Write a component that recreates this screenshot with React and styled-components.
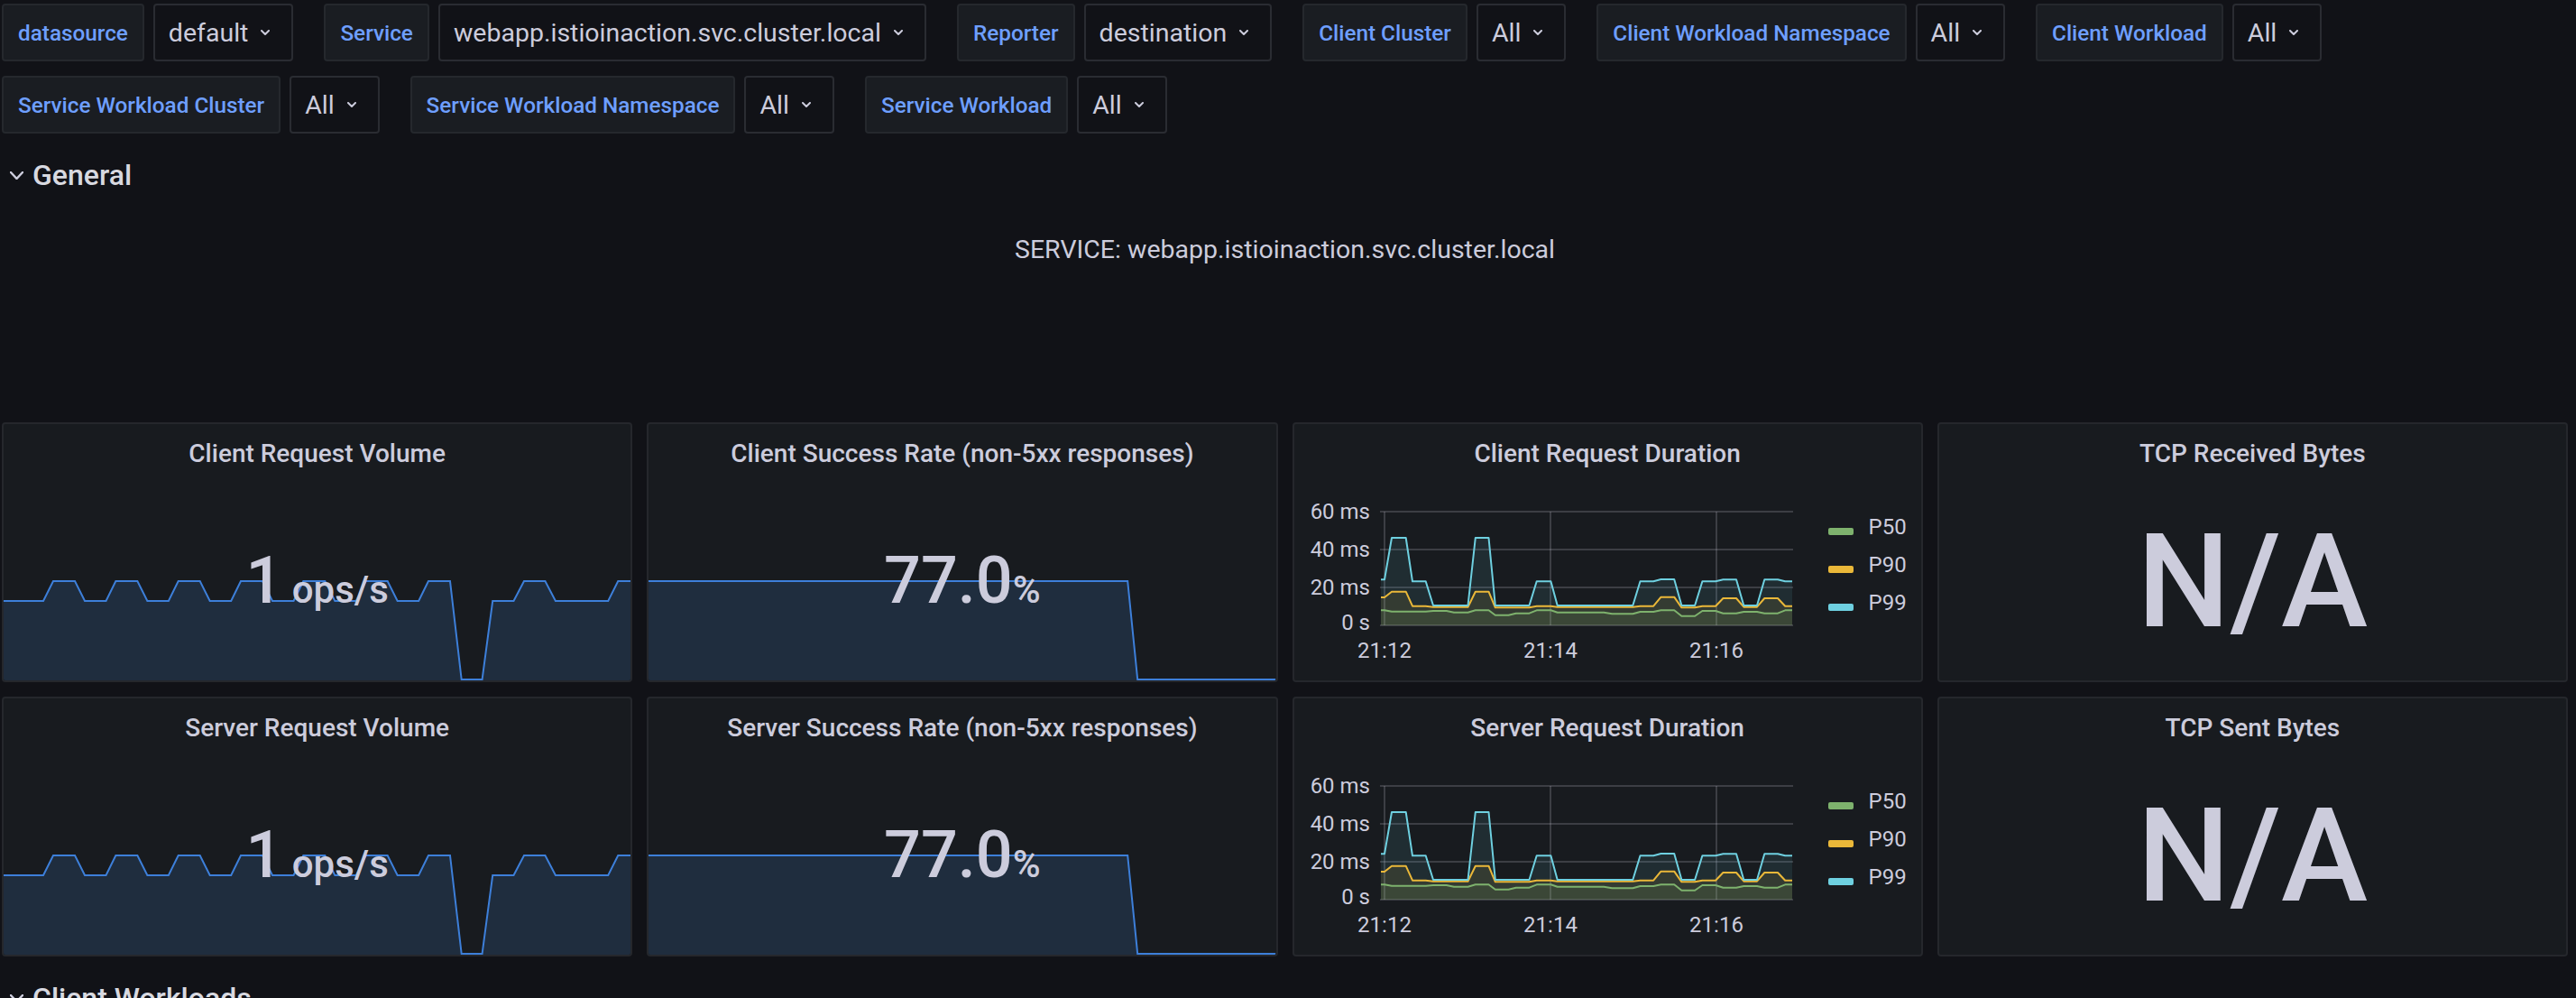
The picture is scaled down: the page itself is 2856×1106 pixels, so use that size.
import React from 'react';
import styled, { createGlobalStyle } from 'styled-components';

const GlobalStyle = createGlobalStyle`
  html, body { margin: 0; padding: 0; background: #111217; }
  body {
    font-family: Roboto, "Liberation Sans", Arial, sans-serif;
    color: #ccccdc;
    overflow: hidden;
  }
`;

const Page = styled.div`
  width: 2856px;
  height: 1106px;
  box-sizing: border-box;
  padding: 4px 9px 0 2px;
  overflow: hidden;
  display: flex;
  flex-direction: column;
  gap: 16px;
`;

const VarBar = styled.div`
  display: flex;
  flex-wrap: wrap;
  column-gap: 34px;
  row-gap: 16px;
`;

const VarGroup = styled.div`
  display: flex;
  gap: 10px;
`;

const VarLabel = styled.div`
  height: 64px;
  box-sizing: border-box;
  display: flex;
  align-items: center;
  padding: 0 16px;
  background: #1a1d22;
  border: 2px solid #25282d;
  border-radius: 4px;
  color: #6e9fff;
  font-size: 24.3px;
  font-weight: 500;
  white-space: nowrap;
`;

const VarSelect = styled.div`
  height: 64px;
  box-sizing: border-box;
  display: flex;
  align-items: center;
  gap: 14px;
  padding: 0 24px 0 15px;
  background: #111217;
  border: 2px solid #2a2c32;
  border-radius: 4px;
  color: #ccccdc;
  font-size: 28.5px;
  white-space: nowrap;
`;

const Grid = styled.div`
  display: grid;
  grid-template-columns: repeat(4, minmax(0, 1fr));
  grid-template-rows: 60px 212px 288px 288px 60px;
  gap: 16px;
`;

const RowHeader = styled.div`
  grid-column: 1 / -1;
  display: flex;
  align-items: center;
  gap: 10px;
  padding-left: 9px;
  font-size: 32px;
  font-weight: 500;
  color: #d8d9e0;
`;

const TextPanel = styled.div`
  grid-column: 1 / -1;
  padding: 16px;
  text-align: center;
  font-size: 28.5px;
  line-height: 42px;
  color: #ccccdc;
`;

const Panel = styled.div`
  background: #181b1f;
  border: 2px solid #25272c;
  border-radius: 4px;
  display: flex;
  flex-direction: column;
  overflow: hidden;
  min-width: 0;
`;

const PanelHeader = styled.div`
  height: 64px;
  flex-shrink: 0;
  display: flex;
  align-items: center;
  justify-content: center;
  font-size: 28px;
  font-weight: 500;
  color: #ccccdc;
  white-space: nowrap;
`;

const StatBody = styled.div`
  flex: 1;
  min-height: 0;
  display: grid;
  grid-template: 1fr / 1fr;
`;

const Spark = styled.svg`
  grid-area: 1 / 1;
  align-self: end;
  width: 100%;
  height: 112px;
  display: block;
`;

const StatValue = styled.div`
  grid-area: 1 / 1;
  align-self: center;
  justify-self: center;
  position: relative;
  font-size: ${p => p.$size}px;
  font-weight: 500;
  line-height: 1;
  color: #ccccdc;
  white-space: pre;
`;

const Unit = styled.span`
  font-size: 42px;
`;

const GraphBody = styled.div`
  flex: 1;
  min-height: 0;
  display: flex;
  align-items: flex-start;
`;

const ChartSvg = styled.svg`
  flex-shrink: 0;
  width: 560px;
  height: 205px;
  margin-left: 2px;
  display: block;
  font-family: Roboto, "Liberation Sans", Arial, sans-serif;
`;

const Legend = styled.div`
  display: flex;
  flex-direction: column;
  padding-top: 29px;
  margin-left: 30px;
`;

const LegendItem = styled.div`
  height: 42px;
  display: flex;
  align-items: center;
  gap: 17px;
  font-size: 24px;
  color: #ccccdc;
`;

const Swatch = styled.span`
  width: 28px;
  height: 8px;
  border-radius: 2px;
  margin-top: 10px;
  background: ${p => p.$color};
`;

const Chevron = ({ w = 10, h = 6, sw = 2 }) => (
  <svg width={w} height={h} viewBox={`0 0 ${w} ${h}`} style={{ flexShrink: 0 }}>
    <polyline
      points={`1,1 ${w / 2},${h - 1} ${w - 1},1`}
      fill="none"
      stroke="#ccccdc"
      strokeWidth={sw}
      strokeLinecap="round"
      strokeLinejoin="round"
    />
  </svg>
);

/* ---------- sparkline data ---------- */
const volumePts = (() => {
  const p = [[0, 24], [44, 24]];
  for (let i = 0; i < 7; i++) {
    const s = 55 + i * 69.3;
    p.push([s, 2], [s + 24, 2]);
    if (i < 6) p.push([s + 35, 24], [s + 58.5, 24]);
  }
  p.push([507.5, 111], [530.4, 111], [542, 24], [565.3, 24], [576.8, 2], [600.2, 2], [611.7, 24], [670, 24], [681, 2], [695, 2]);
  return p;
})();
const successPts = [[0, 2], [531, 2], [542, 111], [695, 111]];

const toLine = pts => pts.map((p, i) => `${i ? 'L' : 'M'}${p[0]},${p[1]}`).join(' ');
const toArea = (pts, base) => `${toLine(pts)} L${pts[pts.length - 1][0]},${base} L${pts[0][0]},${base} Z`;

const Sparkline = ({ pts }) => (
  <Spark viewBox="0 0 695 112" preserveAspectRatio="none">
    <path d={toArea(pts, 112)} fill="#1f2d3e" />
    <path d={toLine(pts)} fill="none" stroke="#3d7fd9" strokeWidth="2" vectorEffect="non-scaling-stroke" />
  </Spark>
);

/* ---------- duration chart data ---------- */
const P99 = [[94,108.3],[98,108.3],[106,62],[121.7,62],[129,110.3],[143.7,110.3],[152,137],[190.5,137],[198.8,62],[213.5,62],[220.8,137],[258.5,137],[266.7,110.3],[282.4,110.3],[289.7,137],[373.3,137],[381.5,110.3],[396.2,110.3],[404.5,108],[419.2,108],[427.4,137],[442.1,137],[450.4,110.3],[465.1,110.3],[473.4,108.3],[488,108.3],[496.3,137],[511,137],[519.3,108.3],[534,108.3],[542.2,110.3],[550,110.3]];
const P90 = [[94,128],[98,128],[106,121.7],[121.7,121.7],[129,137.7],[143.7,137.7],[152,138.7],[190.5,138.7],[198.8,121.7],[213.5,121.7],[220.8,139.3],[258.5,139.3],[266.7,137.7],[282.4,137.7],[289.7,138.7],[373.3,138.7],[381.5,137.7],[396.2,137.7],[404.5,127.7],[419.2,127.7],[427.4,139.3],[442.1,139.3],[450.4,137.7],[465.1,137.7],[473.4,129],[488,129],[496.3,138.7],[511,138.7],[519.3,129],[534,129],[542.2,137.7],[550,137.7]];
const P50 = [[94,142.3],[98,142.3],[106,143.7],[143.7,143.7],[152,143],[166.7,143],[175,144.7],[190.5,144.7],[198.8,142.3],[213.5,142.3],[220.8,147.7],[235.5,147.7],[243.8,145.7],[258.5,145.7],[266.7,142.3],[282.4,142.3],[289.7,144.7],[341.1,144.7],[350.3,146.3],[373.3,146.3],[381.5,144],[396.2,144],[404.5,142.3],[419.2,142.3],[427.4,148.7],[442.1,148.7],[450.4,143],[465.1,143],[473.4,145.7],[488,145.7],[496.3,144],[511,144],[519.3,145.7],[534,145.7],[542.2,142.3],[550,142.3]];

const SERIES = [
  { name: 'P50', color: '#7eb26d', pts: P50 },
  { name: 'P90', color: '#eab839', pts: P90 },
  { name: 'P99', color: '#6ed0e0', pts: P99 },
];

const GRID = 'rgba(204,204,220,0.2)';
const yTicks = [
  { y: 33, label: '60 ms', ty: 33 },
  { y: 75, label: '40 ms', ty: 75 },
  { y: 117, label: '20 ms', ty: 117 },
  { y: 159, label: '0 s', ty: 156 },
];
const xTicks = [
  { x: 98, label: '21:12' },
  { x: 282, label: '21:14' },
  { x: 466, label: '21:16' },
];

const DurationChart = () => (
  <GraphBody>
    <ChartSvg viewBox="0 0 560 205">
      {yTicks.map(t => (
        <line key={t.label} x1="93" x2="551" y1={t.y} y2={t.y} stroke={GRID} strokeWidth="2" />
      ))}
      {xTicks.map(t => (
        <line key={t.label} x1={t.x} x2={t.x} y1="33" y2="159" stroke={GRID} strokeWidth="2" />
      ))}
      {SERIES.slice().reverse().map(s => (
        <path key={s.name + 'a'} d={toArea(s.pts, 159)} fill={s.color} fillOpacity="0.1" />
      ))}
      {SERIES.map(s => (
        <path key={s.name} d={toLine(s.pts)} fill="none" stroke={s.color} strokeWidth="2" strokeLinejoin="round" />
      ))}
      {yTicks.map(t => (
        <text key={t.label} x="82" y={t.ty} textAnchor="end" dominantBaseline="central" fontSize="24" fill="#ccccdc">{t.label}</text>
      ))}
      {xTicks.map(t => (
        <text key={t.label} x={t.x} y="187" textAnchor="middle" dominantBaseline="central" fontSize="24" fill="#ccccdc">{t.label}</text>
      ))}
    </ChartSvg>
    <Legend>
      {SERIES.map(s => (
        <LegendItem key={s.name}>
          <Swatch $color={s.color} />
          {s.name}
        </LegendItem>
      ))}
    </Legend>
  </GraphBody>
);

const StatPanelBody = ({ value, unit, pts }) => (
  <StatBody>
    {pts && <Sparkline pts={pts} />}
    <StatValue $size={72}>
      {value}
      <Unit>{unit}</Unit>
    </StatValue>
  </StatBody>
);

const NABody = () => (
  <StatBody>
    <StatValue $size={145}>N/A</StatValue>
  </StatBody>
);

const VARS = [
  ['datasource', 'default'],
  ['Service', 'webapp.istioinaction.svc.cluster.local'],
  ['Reporter', 'destination'],
  ['Client Cluster', 'All'],
  ['Client Workload Namespace', 'All'],
  ['Client Workload', 'All'],
  ['Service Workload Cluster', 'All'],
  ['Service Workload Namespace', 'All'],
  ['Service Workload', 'All'],
];

const PANELS = ['Client', 'Server'].flatMap(side => [
  { kind: 'stat', title: `${side} Request Volume`, value: '1', unit: ' ops/s', pts: volumePts },
  { kind: 'stat', title: `${side} Success Rate (non-5xx responses)`, value: '77.0', unit: '%', pts: successPts },
  { kind: 'graph', title: `${side} Request Duration` },
  { kind: 'na', title: side === 'Client' ? 'TCP Received Bytes' : 'TCP Sent Bytes' },
]);

export default function App() {
  return (
    <>
      <GlobalStyle />
      <Page>
        <VarBar>
          {VARS.map(([label, value]) => (
            <VarGroup key={label}>
              <VarLabel>{label}</VarLabel>
              <VarSelect>
                {value}
                <Chevron />
              </VarSelect>
            </VarGroup>
          ))}
        </VarBar>
        <Grid>
          <RowHeader>
            <Chevron w={15} h={9} sw={2.5} />
            General
          </RowHeader>
          <TextPanel>SERVICE: webapp.istioinaction.svc.cluster.local</TextPanel>
          {PANELS.map(p => (
            <Panel key={p.title}>
              <PanelHeader>{p.title}</PanelHeader>
              {p.kind === 'stat' && <StatPanelBody value={p.value} unit={p.unit} pts={p.pts} />}
              {p.kind === 'graph' && <DurationChart />}
              {p.kind === 'na' && <NABody />}
            </Panel>
          ))}
          <RowHeader>
            <Chevron w={15} h={9} sw={2.5} />
            Client Workloads
          </RowHeader>
        </Grid>
      </Page>
    </>
  );
}
